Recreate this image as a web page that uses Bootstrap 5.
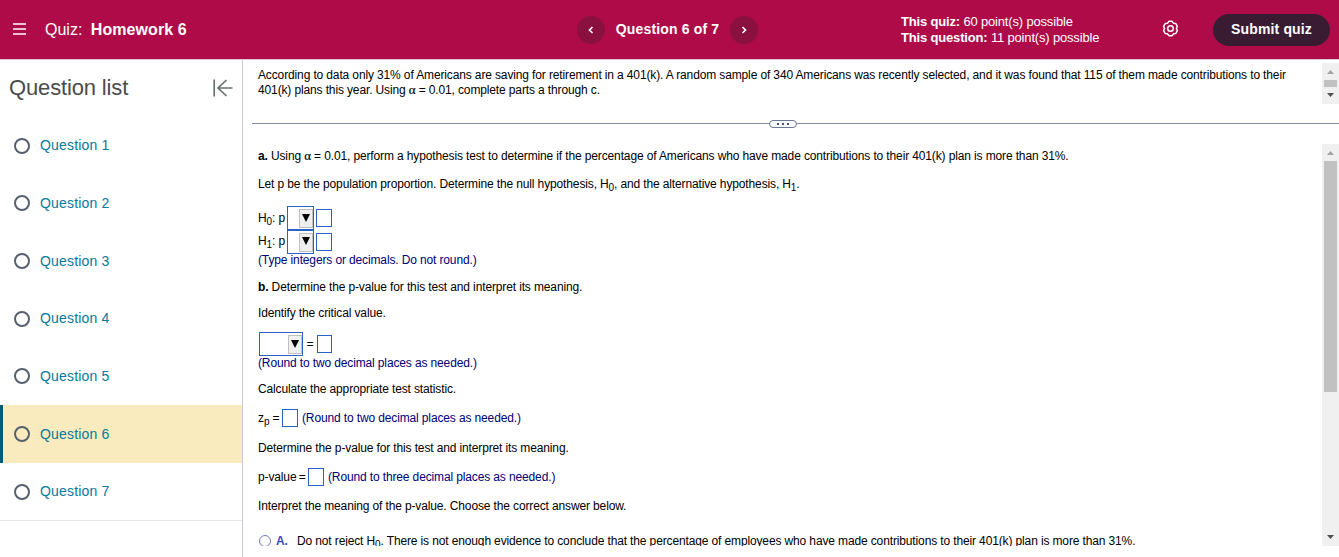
<!DOCTYPE html>
<html lang="en">

<head>
    <meta charset="UTF-8">
    <meta name="viewport" content="width=device-width, initial-scale=1">
    <title>Quiz: Homework 6</title>
    <link href="https://cdn.jsdelivr.net/npm/bootstrap@5.3.0/dist/css/bootstrap.min.css" rel="stylesheet">
    <style>
        body { font-family: "Liberation Sans", Arial, sans-serif; font-size: 12px; line-height: 15px; color: #000; height: 557px; overflow: hidden; }
        svg { display: block; flex: none; }

        /* top bar */
        .quiz-bar { height: 60px; background: #b00b49; border-bottom: 1px solid #d8c9d5; color: #fff; }
        .bar-left { width: 577px; padding-left: 13px; font-size: 16px; gap: 18px; }
        .bar-left b { margin-left: 4px; letter-spacing: .08px; }
        .bar-pager { width: 324px; }
        .pager-btn { width: 28px; height: 28px; background: #8a1040; border: 0; }
        .pager-text { width: 125px; font-size: 14px; font-weight: bold; letter-spacing: .15px; }
        .bar-points { width: 261px; font-size: 13px; line-height: 16px; letter-spacing: -.17px; }
        .btn-submit { width: 117px; height: 32px; margin-left: 34px; background: #3a1c32; color: #fff; font-size: 14px; font-weight: bold; letter-spacing: .15px; }

        /* question list */
        .side-list { width: 243px; height: 497px; border-right: 1px solid #c7cbdc; }
        .side-title { height: 57px; padding: 0 9px 2px 9px; font-size: 22px; letter-spacing: -.15px; color: #4b4b4b; }
        .q-items { border-bottom: 1px solid #e6e7ea; }
        .q-item { height: 57.65px; padding-left: 14px; gap: 10px; font-size: 14px; letter-spacing: .18px; color: #047a9c; text-decoration: none; }
        .q-item.current { background: #f9ebbe; border-left: 3px solid #005a70; padding-left: 11px; }
        .q-ring { width: 16px; height: 16px; border: 2px solid #57606e; border-radius: 50%; }

        /* question body */
        main { letter-spacing: -.132px; }
        .statement { height: 63px; padding: 8px 0 0 15px; white-space: nowrap; }
        .divider { height: 1px; margin-left: 9px; background: #8290a8; }
        .grip { width: 28px; height: 8px; left: 517px; top: -3px; gap: 3px; border: 1px solid #6a7890; border-radius: 4px; background: #f6f8fb; }
        .grip i { width: 2px; height: 2px; background: #4c5565; }
        .parts { height: 402px; margin-top: 20px; padding-left: 15px; overflow: hidden; white-space: nowrap; }
        .ln { display: flex; align-items: center; height: 28px; }
        .ln sub { font-size: 10px; line-height: 0; bottom: -3px; }
        .h24 { height: 24px; }
        .h26 { height: 26px; }
        .h32 { height: 32px; }
        .hyp { width: 29px; }
        .hint { color: #000078; }
        .alpha { font-family: "Liberation Serif", serif; font-size: 13px; line-height: 0; -webkit-text-stroke: .2px #000; }
        .ans { width: 16px; height: 18px; border: 1px solid #2a62c6; background: #fff; flex: none; }
        .pick { width: 27px; height: 24px; border: 1px solid #2a62c6; background: #fff; padding: 2px 0; flex: none; }
        .pick span { width: 14px; height: 19px; padding-bottom: 2px; border: 1px solid #c0c0c0; background: #efefef; }
        .radio-ring { width: 12px; height: 12px; border: 1px solid #7078cc; border-radius: 50%; }

        /* scrollbars */
        .sbar { width: 17px; right: 0; background: #f0f0f0; }
        .sbar .thumb { width: 13px; background: #c1c1c1; }
    </style>
</head>

<body>
    <header class="quiz-bar d-flex align-items-center">
        <div class="bar-left d-flex align-items-center">
            <svg width="14" height="14" viewBox="0 0 14 14" stroke="#fff" stroke-width="1.4"><path d="M0 1h13M0 6h13M0 11h13" /></svg>
            <span>Quiz: <b>Homework 6</b></span>
        </div>
        <div class="bar-pager d-flex align-items-center">
            <button class="pager-btn rounded-circle d-flex align-items-center justify-content-center p-0" aria-label="Previous">
                <svg width="6" height="8" viewBox="0 0 6 8" fill="none" stroke="#fff" stroke-width="1.6"><path d="M4.5 1L1.5 4l3 3" /></svg>
            </button>
            <div class="pager-text text-center">Question 6 of 7</div>
            <button class="pager-btn rounded-circle d-flex align-items-center justify-content-center p-0" aria-label="Next">
                <svg width="6" height="8" viewBox="0 0 6 8" fill="none" stroke="#fff" stroke-width="1.6"><path d="M1.5 1l3 3-3 3" /></svg>
            </button>
        </div>
        <div class="bar-points">
            <div><b>This quiz:</b> 60 point(s) possible</div>
            <div><b>This question:</b> 11 point(s) possible</div>
        </div>
        <svg style="margin-bottom: 2px;" width="17" height="17" viewBox="0 0 17 17" fill="none" stroke="#fff" stroke-width="1.5" stroke-linejoin="round">
            <path d="M6.9 1.3H10.1L11.4 3.2L13.8 3.5L15.4 6.3L14.4 8.5L15.4 10.7L13.8 13.5L11.4 13.8L10.1 15.7H6.9L5.6 13.8L3.2 13.5L1.6 10.7L2.6 8.5L1.6 6.3L3.2 3.5L5.6 3.2Z" />
            <circle cx="8.5" cy="8.5" r="2.8" />
        </svg>
        <button class="btn btn-submit rounded-pill p-0">Submit quiz</button>
    </header>

    <div class="d-flex">
        <nav class="side-list flex-shrink-0">
            <div class="side-title d-flex align-items-center justify-content-between">
                <span>Question list</span>
                <svg width="20" height="18" viewBox="0 0 20 18" fill="none" stroke="#6a7070" stroke-width="1.7"><path d="M1.2 .5v17M19.5 9H5M13.5 1L5 9l8.5 8" /></svg>
            </div>
            <div class="q-items">
                <a class="q-item d-flex align-items-center" href="#"><span class="q-ring"></span>Question 1</a>
                <a class="q-item d-flex align-items-center" href="#"><span class="q-ring"></span>Question 2</a>
                <a class="q-item d-flex align-items-center" href="#"><span class="q-ring"></span>Question 3</a>
                <a class="q-item d-flex align-items-center" href="#"><span class="q-ring"></span>Question 4</a>
                <a class="q-item d-flex align-items-center" href="#"><span class="q-ring"></span>Question 5</a>
                <a class="q-item current d-flex align-items-center" href="#"><span class="q-ring"></span>Question 6</a>
                <a class="q-item d-flex align-items-center" href="#"><span class="q-ring"></span>Question 7</a>
            </div>
        </nav>

        <main class="flex-grow-1">
            <div class="statement position-relative">
                <div>According to data only 31% of Americans are saving for retirement in a 401(k). A random sample of 340 Americans was recently selected, and it was found that 115 of them made contributions to their</div>
                <div>401(k) plans this year. Using <span class="alpha">α</span> = 0.01, complete parts a through c.</div>
                <div class="sbar position-absolute d-flex flex-column align-items-center" style="top: 3px; height: 41px;">
                    <svg width="17" height="17" viewBox="0 0 17 17" fill="#a3a3a3"><path d="M5 11l3.5-4 3.5 4z" /></svg>
                    <div class="thumb" style="height: 7px;"></div>
                    <svg width="17" height="17" viewBox="0 0 17 17" fill="#505050"><path d="M5 6l3.5 4 3.5-4z" /></svg>
                </div>
            </div>
            <div class="divider position-relative">
                <div class="grip position-absolute d-flex align-items-center justify-content-center"><i></i><i></i><i></i></div>
            </div>

            <div class="parts position-relative">
                <div class="ln h24"><span><b>a.</b> Using <span class="alpha">α</span> = 0.01, perform a hypothesis test to determine if the percentage of Americans who have made contributions to their 401(k) plan is more than 31%.</span></div>
                <div class="ln h32"><span>Let p be the population proportion. Determine the null hypothesis, H<sub>0</sub>, and the alternative hypothesis, H<sub>1</sub>.</span></div>
                <div class="ln h24" style="margin-top: 6px;">
                    <span class="hyp">H<sub>0</sub>: p</span>
                    <div class="pick d-flex justify-content-end"><span class="d-flex align-items-center justify-content-center"><svg width="8" height="8" viewBox="0 0 8 8"><path d="M0 0h8L4 8z" /></svg></span></div>
                    <div class="ans" style="margin-left: 2px;"></div>
                </div>
                <div class="ln" style="height: 23px;">
                    <span class="hyp">H<sub>1</sub>: p</span>
                    <div class="pick d-flex justify-content-end"><span class="d-flex align-items-center justify-content-center"><svg width="8" height="8" viewBox="0 0 8 8"><path d="M0 0h8L4 8z" /></svg></span></div>
                    <div class="ans" style="margin-left: 2px;"></div>
                </div>
                <div class="ln hint" style="height: 14px;"><span>(Type integers or decimals. Do not round.)</span></div>
                <div class="ln h26" style="margin-top: 7px;"><span><b>b.</b> Determine the p-value for this test and interpret its meaning.</span></div>
                <div class="ln h26"><span>Identify the critical value.</span></div>
                <div class="ln h24" style="margin-top: 6px;">
                    <div class="pick d-flex justify-content-end" style="width: 44px; margin-left: 1px;"><span class="d-flex align-items-center justify-content-center"><svg width="8" height="8" viewBox="0 0 8 8"><path d="M0 0h8L4 8z" /></svg></span></div>
                    <span class="text-center" style="width: 14px;">=</span>
                    <div class="ans" style="width: 15px;"></div>
                </div>
                <div class="ln hint" style="height: 14px;"><span>(Round to two decimal places as needed.)</span></div>
                <div class="ln h26" style="margin-top: 6px;"><span>Calculate the appropriate test statistic.</span></div>
                <div class="ln" style="margin-top: 2px;">
                    <span style="width: 24px;">z<sub>p</sub> =</span>
                    <div class="ans"></div>
                    <span class="hint ms-1">(Round to two decimal places as needed.)</span>
                </div>
                <div class="ln" style="margin-top: 2px;"><span>Determine the p-value for this test and interpret its meaning.</span></div>
                <div class="ln" style="margin-top: 1px;">
                    <span style="width: 50px; word-spacing: -1px;">p-value =</span>
                    <div class="ans"></div>
                    <span class="hint ms-1">(Round to three decimal places as needed.)</span>
                </div>
                <div class="ln" style="margin-top: 1px;"><span>Interpret the meaning of the p-value. Choose the correct answer below.</span></div>
                <div class="ln" style="margin-top: 7px;">
                    <span class="radio-ring" style="margin-left: 1px;"></span>
                    <b style="width: 21px; margin-left: 5px; color: #3c48c0;">A.</b>
                    <span>Do not reject H<sub>0</sub>. There is not enough evidence to conclude that the percentage of employees who have made contributions to their 401(k) plan is more than 31%.</span>
                </div>
                <div class="sbar position-absolute top-0 bottom-0 d-flex flex-column align-items-center">
                    <svg width="17" height="17" viewBox="0 0 17 17" fill="#a3a3a3"><path d="M5 11l3.5-4 3.5 4z" /></svg>
                    <div class="thumb" style="height: 231px;"></div>
                    <svg class="mt-auto" width="17" height="17" viewBox="0 0 17 17" fill="#505050"><path d="M5 6l3.5 4 3.5-4z" /></svg>
                </div>
            </div>
        </main>
    </div>

    <script src="https://cdn.jsdelivr.net/npm/bootstrap@5.3.0/dist/js/bootstrap.bundle.min.js"></script>
</body>

</html>
